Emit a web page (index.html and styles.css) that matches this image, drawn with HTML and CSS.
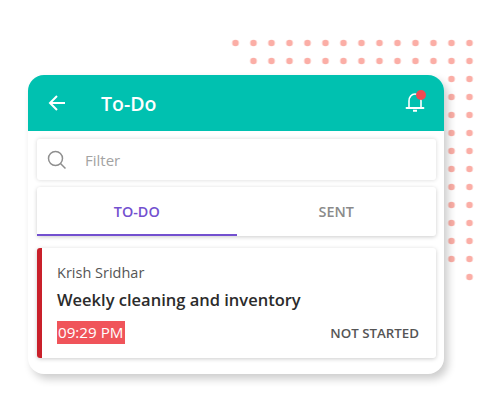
FILE: index.html
```html
<!DOCTYPE html>
<html lang="en">
  <head>
    <meta charset="UTF-8" />
    <meta name="viewport" content="width=device-width, initial-scale=1" />
    <title>To-Do</title>
    <link rel="stylesheet" href="styles.css">
  </head>
  <body>
    <!-- Dotted backdrop -->
    <svg class="dots" width="500" height="416" viewBox="0 0 500 416" aria-hidden="true">
      <defs>
        <pattern id="dot" x="226.5" y="34" width="18" height="18" patternUnits="userSpaceOnUse">
          <circle cx="9" cy="9" r="3.3" fill="#fbaea6" />
        </pattern>
      </defs>
      <rect x="226.5" y="34" width="18" height="18" fill="url(#dot)" />
      <rect x="244.5" y="34" width="234" height="36" fill="url(#dot)" />
      <rect x="442.5" y="70" width="18" height="198" fill="url(#dot)" />
      <rect x="460.5" y="70" width="18" height="216" fill="url(#dot)" />
    </svg>

    <div class="card">
      <div class="topbar">
        <svg class="back" width="18" height="18" viewBox="0 0 18 18" fill="none" stroke="#fff" stroke-width="2">
          <path d="M17 9H2M9 2L2 9l7 7" />
        </svg>
        <h1>To-Do</h1>
        <span class="bell">
          <svg width="22" height="24" viewBox="0 0 22 24" fill="none" stroke="#fff" stroke-width="1.6">
            <path d="M5 17.500V11C5 7 7.500 4 11 4s6 3 6 7v6.500" />
            <path d="M2.500 18H19.500" stroke-width="1.800" stroke-linecap="round" />
            <path d="M9 20.800h4" stroke-width="2" />
          </svg>
          <i class="badge"></i>
        </span>
      </div>

      <div class="filter">
        <svg width="20" height="20" viewBox="0 0 20 20" fill="none" stroke="#8f8f8f" stroke-width="1.500">
          <circle cx="8.500" cy="8.500" r="7" />
          <path d="M13.500 13.500L18.500 18.500" />
        </svg>
        <span>Filter</span>
      </div>

      <div class="tabs">
        <div class="tab active">TO-DO</div>
        <div class="tab">SENT</div>
      </div>

      <div class="item">
        <div class="name">Krish Sridhar</div>
        <div class="title">Weekly cleaning and inventory</div>
        <div class="meta">
          <span class="time">09:29 PM</span>
          <span class="status">NOT STARTED</span>
        </div>
      </div>
    </div>
  </body>
</html>
```

FILE: styles.css
```css
* { box-sizing: border-box; }
html, body {
  margin: 0;
  padding: 0;
  height: 416px;
  overflow: hidden;
  background: #fff;
  font-family: "Open Sans", "Liberation Sans", sans-serif;
}
body { padding: 75px 0 0 28px; }
.dots {
  position: absolute;
  top: 0;
  left: 0;
}
.card {
  position: relative;
  width: 416px;
  height: 299px;
  background: #fff;
  border-radius: 16px;
  box-shadow: 4px 5px 9px rgba(0, 0, 0, 0.2);
  overflow: hidden;
}
.topbar {
  display: flex;
  align-items: center;
  height: 56px;
  padding: 0 18px 0 20px;
  background: #00c1b0;
  color: #fff;
}
.back { flex: none; }
.topbar h1 {
  flex: 1;
  margin: 0 0 0 35px;
  font-size: 19.500px;
  font-weight: 600;
}
.bell {
  position: relative;
  display: block;
  height: 24px;
  margin-top: -2px;
}
.badge {
  position: absolute;
  top: 0;
  right: 0;
  width: 10px;
  height: 10px;
  border-radius: 50%;
  background: #ef4a52;
}
.filter {
  display: flex;
  align-items: center;
  height: 41px;
  margin: 8px 8px 0 9px;
  padding-left: 10px;
  border-radius: 3px;
  box-shadow: 0 0 4px rgba(0, 0, 0, 0.16);
  color: #a3a3a3;
  font-size: 15px;
}
.filter span { margin-left: 18px; }
.tabs {
  display: flex;
  height: 49px;
  margin: 7px 8px 0 9px;
  border-radius: 3px;
  box-shadow: 0 1px 4px rgba(0, 0, 0, 0.2);
}
.tab {
  flex: 1;
  padding-top: 15px;
  text-align: center;
  font-size: 14.400px;
  font-weight: 600;
  color: #8a8a8a;
}
.tab.active {
  color: #7350cf;
  border-bottom: 2px solid #7350cf;
}
.item {
  height: 110px;
  margin: 12px 8px 0 9px;
  padding: 15px 16px 0 15px;
  border-left: 5px solid #c9202a;
  border-radius: 3px;
  box-shadow: 0 1px 4px rgba(0, 0, 0, 0.2);
}
.name {
  font-size: 14.500px;
  line-height: 20px;
  color: #555;
}
.title {
  margin-top: 5px;
  font-size: 16.500px;
  line-height: 24px;
  font-weight: 600;
  color: #2b2b2b;
}
.meta {
  display: flex;
  align-items: center;
  justify-content: space-between;
  margin-top: 9px;
}
.time {
  padding: 0 1.500px 0 1px;
  background: #f0545a;
  color: #fff;
  font-size: 15.200px;
  line-height: 23px;
}
.status {
  margin-right: 1px;
  font-size: 13.300px;
  font-weight: 600;
  color: #555;
}
```
